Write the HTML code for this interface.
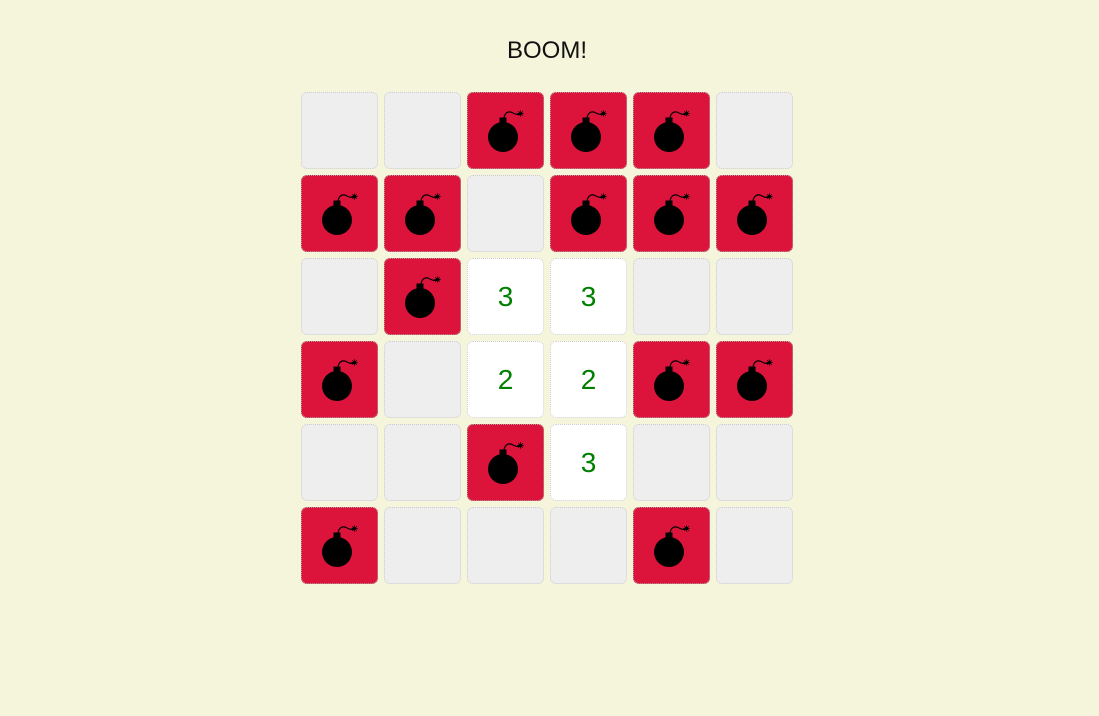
<!DOCTYPE html>
<html><head><style>
body{margin:0;background:#f5f5dc;font-family:"Liberation Sans",sans-serif;width:1099px;height:716px;overflow:hidden;position:relative}
h1{position:absolute;top:37px;left:0;width:1094px;text-align:center;margin:0;font-weight:normal;font-size:24px;color:#111}
.t{position:absolute;width:75px;height:75px;border:1px dotted #ccc;border-radius:6px;background:#eee;box-sizing:content-box}
.b{background:#dc143c;border-color:#b0a0a0}
.n{background:#fff;color:#008000;font-size:28px;text-align:center;line-height:75px}
.t svg{position:absolute;left:0;top:0}
</style></head><body>
<h1>BOOM!</h1>
<div id="g"></div>
<script>
var m=["..BBB.","BB.BBB",".B33..","B.22BB","..B3..","B...B."];
var s='<svg width="77" height="77"><circle cx="35" cy="44" r="15" fill="#000"/><rect x="31.5" y="24.5" width="7" height="5" fill="#000"/><path d="M36 25 C37 19,41 18,44 19.5 C47 21,49 22,52 21" stroke="#000" stroke-width="1.2" fill="none"/><circle cx="52.5" cy="20.5" r="1.8" fill="#000"/><path d="M52.5 17.3v6.4M49.3 20.5h6.4M50.2 18.2l4.6 4.6M54.8 18.2l-4.6 4.6" stroke="#000" stroke-width="0.7"/></svg>';
var h='';
for(var r=0;r<6;r++)for(var c=0;c<6;c++){var ch=m[r][c],x=301+c*83,y=92+r*83;
if(ch=='B')h+='<div class="t b" style="left:'+x+'px;top:'+y+'px">'+s+'</div>';
else if(ch=='.')h+='<div class="t" style="left:'+x+'px;top:'+y+'px"></div>';
else h+='<div class="t n" style="left:'+x+'px;top:'+y+'px">'+ch+'</div>';}
document.getElementById('g').innerHTML=h;
</script>
</body></html>
